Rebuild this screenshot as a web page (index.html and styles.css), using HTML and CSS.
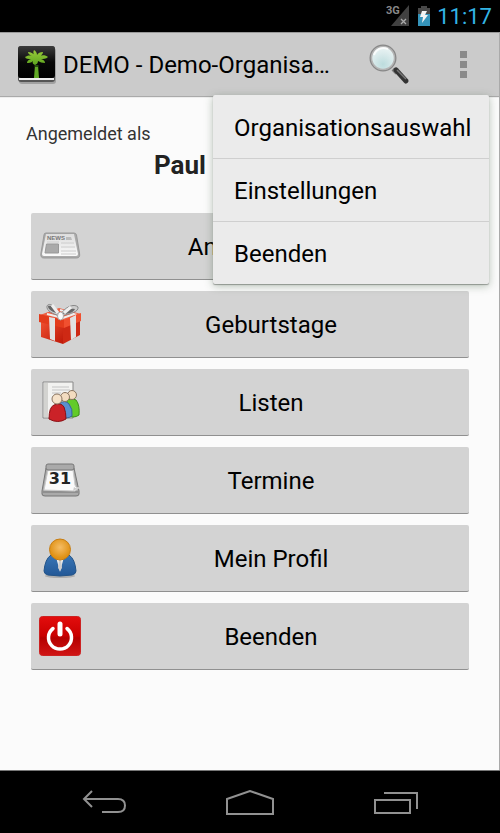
FILE: index.html
```html
<!DOCTYPE html>
<html lang="de">
<head>
<meta charset="utf-8">
<meta name="viewport" content="width=device-width, initial-scale=1">
<title>DEMO - Demo-Organisation</title>
<link rel="stylesheet" href="styles.css">
</head>
<body>
<div class="status">
  <svg class="signal" width="26" height="24" viewBox="0 0 26 24" aria-hidden="true">
    <path d="M24 3V24H6Z" fill="#414141"/>
    <path d="M16 17l5 5M21 17l-5 5" stroke="#aaa" stroke-width="1.3"/>
    <text x="1" y="12" class="net">3G</text>
  </svg>
  <svg width="14" height="24" viewBox="0 0 14 24" aria-hidden="true">
    <path d="M4 4h6v2h3v6H1V6h3Z" fill="#484848"/>
    <path d="M1 12h12v12H1Z" fill="#3594ba"/>
    <path d="M5 9h5l-2 4h3l-6 8 1-6H3Z" fill="#f4f4f4"/>
  </svg>
  <time class="clock">11:17</time>
</div>

<header class="bar">
  <svg class="logo" width="38" height="38" viewBox="0 0 38 38" aria-hidden="true">
    <defs>
      <linearGradient id="blk" x1="0" y1="0" x2="0" y2="1"><stop offset="0" stop-color="#3c3c3c"/><stop offset=".5" stop-color="#080808"/><stop offset="1" stop-color="#000"/></linearGradient>
      <linearGradient id="leaf" x1="0" y1="0" x2="0" y2="1"><stop offset="0" stop-color="#9acb3a"/><stop offset="1" stop-color="#5da51f"/></linearGradient>
    </defs>
    <rect x="1" y="2" width="37" height="36" rx="3" fill="#777" opacity=".5"/>
    <rect width="37" height="36" rx="3" fill="#555"/>
    <rect width="37" height="32" rx="3" fill="url(#blk)"/>
    <path d="M1 33h35" stroke="#eee" stroke-width="2"/>
    <path d="M17 19h3l1 13h-5Z" fill="#62a926"/>
    <path d="M16 20h5" stroke="#17330a" stroke-width="1.5"/>
    <path d="M17 10C15 8 15 6 16 4c2 1 3 3 3 5 1-2 3-3 6-3 0 2-2 4-4 4 3-1 7-1 9 1-2 2-5 2-7 2 3 1 4 2 4 4-3 0-5-1-7-2 0 2-1 3-3 4-2-1-3-2-2-4-2 2-4 2-6 2 0-2 1-3 4-4-3 0-5 0-6-2 2-1 4-2 7-1-3-1-4-3-4-4 3 0 5 1 7 4Z" fill="url(#leaf)"/>
  </svg>
  <h1 class="title">DEMO - Demo-Organisation</h1>
  <button class="icon-btn search" type="button" aria-label="Suchen">
    <svg width="42" height="42" viewBox="0 0 42 42" aria-hidden="true">
      <defs><radialGradient id="lens" cx=".5" cy=".75" r=".8"><stop offset="0" stop-color="#bcdcdd"/><stop offset=".5" stop-color="#d9eaeb"/><stop offset="1" stop-color="#f3f8f8"/></radialGradient></defs>
      <path d="M24 25l4 4" stroke="#777" stroke-width="4"/>
      <path d="M27 26L37 37" stroke="#333" stroke-width="5" stroke-linecap="round"/>
      <path d="M28 26L37 35" stroke="#777" stroke-width="1.5"/>
      <circle cx="14" cy="14" r="12.500" fill="url(#lens)" stroke="#888" stroke-width="2"/>
      <circle cx="14" cy="14" r="11.500" fill="none" stroke="#b5b5b5" stroke-width="1.500"/>
      <path d="M5 11a10 10 0 0 1 14-6" fill="none" stroke="#fff" stroke-width="2" opacity=".8"/>
    </svg>
  </button>
  <button class="icon-btn more" type="button" aria-label="Weitere Optionen" aria-expanded="true">
    <svg width="7" height="27" viewBox="0 0 7 27" aria-hidden="true"><path d="M0 0h7v7H0ZM0 10h7v7H0ZM0 20h7v7H0Z" fill="#8a8a8a"/></svg>
  </button>
  <div class="menu">
    <button type="button">Organisationsauswahl</button>
    <button type="button">Einstellungen</button>
    <button type="button">Beenden</button>
  </div>
</header>

<main class="content">
  <p class="label">Angemeldet als</p>
  <p class="user">Paul</p>
  <div class="list">
    <button type="button">
      <svg width="42" height="42" viewBox="0 0 42 42" aria-hidden="true">
        <defs><linearGradient id="pap" x1="0" y1="0" x2="0" y2="1"><stop offset="0" stop-color="#ddd"/><stop offset="1" stop-color="#fafafa"/></linearGradient></defs>
        <path d="M7 8h28q2 0 2.500 2l3 18q1 5-3 5H5q-4 0-3-5L5 10q0-2 2-2Z" fill="#aaa" stroke="#999"/>
        <path d="M7 9h28l4 20q0 2-2 2H5q-2 0-2-2Z" fill="url(#pap)"/>
        <text x="8" y="15" class="news">NEWS</text>
        <path d="M27 12h5l1 3h-6Z" fill="#bbb"/>
        <path d="M7.500 19h12v9H6Z" fill="#aaa" stroke="#999"/>
        <path d="M8 17h12M22 18h13M22 22h14M22 26h15M22 29h15" stroke="#ccc"/>
      </svg><span>Ankündigungen</span>
    </button>
    <button type="button">
      <svg width="42" height="42" viewBox="0 0 42 42" aria-hidden="true">
        <defs><linearGradient id="red" x1="0" y1="0" x2="1" y2="1"><stop offset="0" stop-color="#ef5030"/><stop offset="1" stop-color="#bd1808"/></linearGradient></defs>
        <path d="M1 12l19-7 22 6-18 10Z" fill="#ed6143"/>
        <path d="M2 18l22 5v18L2 34Z" fill="url(#red)"/>
        <path d="M24 23l17-7v16L24 41Z" fill="#ce2914"/>
        <path d="M0 11l25 6v8L0 19Z" fill="#e33c1c"/>
        <path d="M25 17l17-7v8l-17 7Z" fill="#f0502f"/>
        <path d="M10 14l6 1v23l-5-2ZM31 15l6-3v22l-5 3Z" fill="#e1e1e1"/>
        <path d="M8 11l16 4 11-4-14-4" fill="none" stroke="#eee" stroke-width="2"/>
        <path d="M21 13C17 3 10-1 8 3c-1 5 6 8 13 10C25 4 35 0 39 4c1 5-8 7-18 9Z" fill="#ccc" stroke="#888"/>
        <path d="M20 11C17 6 13 2 9 3c0 4 5 6 11 8ZM23 11c4-5 8-6 13-5-1 3-6 5-13 5Z" fill="#666"/>
        <path d="M13 2l6 8M32 4l-7 6" stroke="#eee" stroke-width="3"/>
        <ellipse cx="21.500" cy="13" rx="3" ry="4" fill="#fafafa" stroke="#aaa"/>
      </svg><span>Geburtstage</span>
    </button>
    <button type="button">
      <svg width="42" height="42" viewBox="0 0 42 42" aria-hidden="true">
        <path d="M4 1h30v36H4Z" fill="#f2f2f0" stroke="#888"/>
        <path d="M5 2h4v34H5Z" fill="#d3d3d0"/>
        <path d="M13 6h17M13 9h18M13 12h9" stroke="#c4c4c4"/>
        <path d="M26 34l2-15q5-3 9 0 4 5 3 15-5 4-14 0Z" fill="#62cb28" stroke="#3c8e18"/>
        <circle cx="33" cy="14" r="4.500" fill="#f3dcc0" stroke="#8a7561"/>
        <path d="M18 35l2-12q6-5 10 0 4 5 3 12-5 4-15 0Z" fill="#5a90cf" stroke="#386596"/>
        <circle cx="26" cy="16" r="4.500" fill="#f3dcc0" stroke="#8a7561"/>
        <path d="M10 38q0-12 5-14 7-3 10 2 2 5 2 12-8 5-17 0Z" fill="#cb2228" stroke="#8a1015"/>
        <circle cx="18" cy="18" r="5" fill="#f6e2c9" stroke="#8a7561"/>
      </svg><span>Listen</span>
    </button>
    <button type="button">
      <svg width="42" height="42" viewBox="0 0 42 42" aria-hidden="true">
        <path d="M7 9L3 32v3q0 2 3 2h31q3 0 3-2v-3L35 9Z" fill="#aaa" stroke="#777"/>
        <path d="M4 33h35" stroke="#777"/>
        <path d="M9 11h25l2 15q1 4 5 2l-5 4-31-1Z" fill="#fafafa" stroke="#ccc"/>
        <path d="M35 28q2 2 5 1l-6 3Z" fill="#ccc"/>
        <rect x="7" y="5" width="28" height="6" rx="2" fill="#aaa" stroke="#777"/>
        <text x="21" y="25" class="day">31</text>
      </svg><span>Termine</span>
    </button>
    <button type="button">
      <svg width="42" height="42" viewBox="0 0 42 42" aria-hidden="true">
        <defs><radialGradient id="head" cx=".5" cy=".4"><stop offset="0" stop-color="#f5bd65"/><stop offset="1" stop-color="#e09216"/></radialGradient><linearGradient id="suit" x1="0" y1="0" x2="0" y2="1"><stop offset="0" stop-color="#3976b6"/><stop offset="1" stop-color="#225796"/></linearGradient></defs>
        <ellipse cx="21" cy="39" rx="15" ry="2" fill="#888" opacity=".5"/>
        <path d="M12 18Q6 22 5 34q0 3 4 4 12 2 24 0 4-1 4-4-1-12-7-16Z" fill="url(#suit)" stroke="#245488"/>
        <path d="M17 20h8l-4 15Z" fill="#eee"/>
        <path d="M20 23h2l1 8-2 3-2-3Z" fill="#ccc"/>
        <circle cx="21" cy="12.500" r="10.500" fill="url(#head)" stroke="#c77d12"/>
      </svg><span>Mein Profil</span>
    </button>
    <button type="button">
      <svg width="42" height="42" viewBox="0 0 42 42" aria-hidden="true">
        <defs><linearGradient id="pow" x1="0" y1="0" x2="0" y2="1"><stop offset="0" stop-color="#e30d0d"/><stop offset=".5" stop-color="#c90000"/><stop offset=".55" stop-color="#b50000"/><stop offset="1" stop-color="#d01515"/></linearGradient></defs>
        <rect x=".5" y="1.500" width="41" height="39" rx="3" fill="url(#pow)" stroke="#c22"/>
        <path d="M14 13.500a11.500 11.500 0 1 0 14 0" fill="none" stroke="#fff" stroke-width="3.500" stroke-linecap="round"/>
        <path d="M21 9v10" stroke="#fff" stroke-width="5" stroke-linecap="round"/>
      </svg><span>Beenden</span>
    </button>
  </div>
</main>

<nav class="nav">
  <button type="button" aria-label="Zurück"><svg width="44" height="26" viewBox="0 0 44 26" aria-hidden="true"><path d="M10 1L2 9l8 8M2 9h34q7 0 7 6.500T36 22H20" /></svg></button>
  <button type="button" aria-label="Startseite"><svg width="48" height="26" viewBox="0 0 48 26" aria-hidden="true"><path d="M1 9L24 1l23 8v15H1Z"/></svg></button>
  <button type="button" aria-label="Letzte Apps"><svg width="44" height="26" viewBox="0 0 44 26" aria-hidden="true"><path d="M1 10h35v13H1ZM10 3h33v16"/></svg></button>
</nav>
</body>
</html>
```
FILE: styles.css
```css
* { box-sizing: border-box; }
body {
  margin: 0;
  min-height: 100vh;
  display: flex;
  flex-direction: column;
  background: #fbfbfb;
  color: #000;
  font-family: Roboto, "Noto Sans", sans-serif;
}
h1, p { margin: 0; }
button {
  margin: 0;
  padding: 0;
  border: 0;
  background: none;
  color: inherit;
  font: inherit;
}
svg { display: block; flex: none; }

.status {
  display: flex;
  justify-content: flex-end;
  align-items: flex-start;
  gap: 6px;
  height: 32px;
  padding: 2px 8px 0;
  background: #000;
}
.net { font: bold 11px Roboto, sans-serif; fill: #888; }
.clock { color: #33b5e5; font-size: 22px; line-height: 30px; }

.bar {
  position: relative;
  display: flex;
  align-items: center;
  height: 64px;
  padding-left: 18px;
  background: #cbcbcb;
  border-top: 1px solid #999;
  border-right: 1px solid #aaa;
  box-shadow: 0 1px 1px #aaa;
}
.title {
  flex: 1;
  min-width: 0;
  max-width: 272px;
  margin-left: 7px;
  overflow: hidden;
  white-space: nowrap;
  text-overflow: ellipsis;
  font-size: 24px;
  font-weight: 400;
}
.icon-btn { display: grid; place-items: center; height: 100%; }
.search { width: 74px; margin-left: auto; }
.more { width: 72px; }

.menu {
  position: absolute;
  z-index: 1;
  top: 62px;
  right: 10px;
  width: 276px;
  background: #ebebeb;
  border-radius: 2px;
  box-shadow: 0 2px 8px rgba(50, 80, 50, .35), 0 1px 1px #aaa;
}
.menu button {
  display: block;
  width: 100%;
  height: 63px;
  padding: 2px 21px 0;
  text-align: left;
  font-size: 24px;
}
.menu button + button { border-top: 1px solid #cfcfcf; }

.content { flex: 1; padding: 24px 30px 24px 31px; border-right: 1px solid #aaa; }
.label { margin-left: -5px; color: #333; font-size: 18px; line-height: 28px; }
.user { padding-left: 123px; color: #222; font-size: 26px; font-weight: 700; line-height: 34px; }
.list { display: grid; gap: 11px; margin-top: 31px; }
.list button {
  display: flex;
  align-items: center;
  height: 67px;
  padding: 0 8px;
  background: #d3d3d3;
  border-bottom: 1px solid #909090;
  border-radius: 2px;
  font-size: 24px;
}
.list span { flex: 1; padding-top: 2px; text-align: center; }
.news { font: bold 6px "Liberation Sans", sans-serif; fill: #777; }
.day { font: bold 16px "DejaVu Sans", sans-serif; fill: #222; text-anchor: middle; }

.nav {
  display: flex;
  justify-content: center;
  height: 63px;
  padding-top: 2px;
  background: #000;
  border-top: 1px solid #777;
}
.nav button { display: grid; place-items: center; flex: 0 1 146px; }
.nav path { fill: none; stroke: #919191; stroke-width: 2; }
```
